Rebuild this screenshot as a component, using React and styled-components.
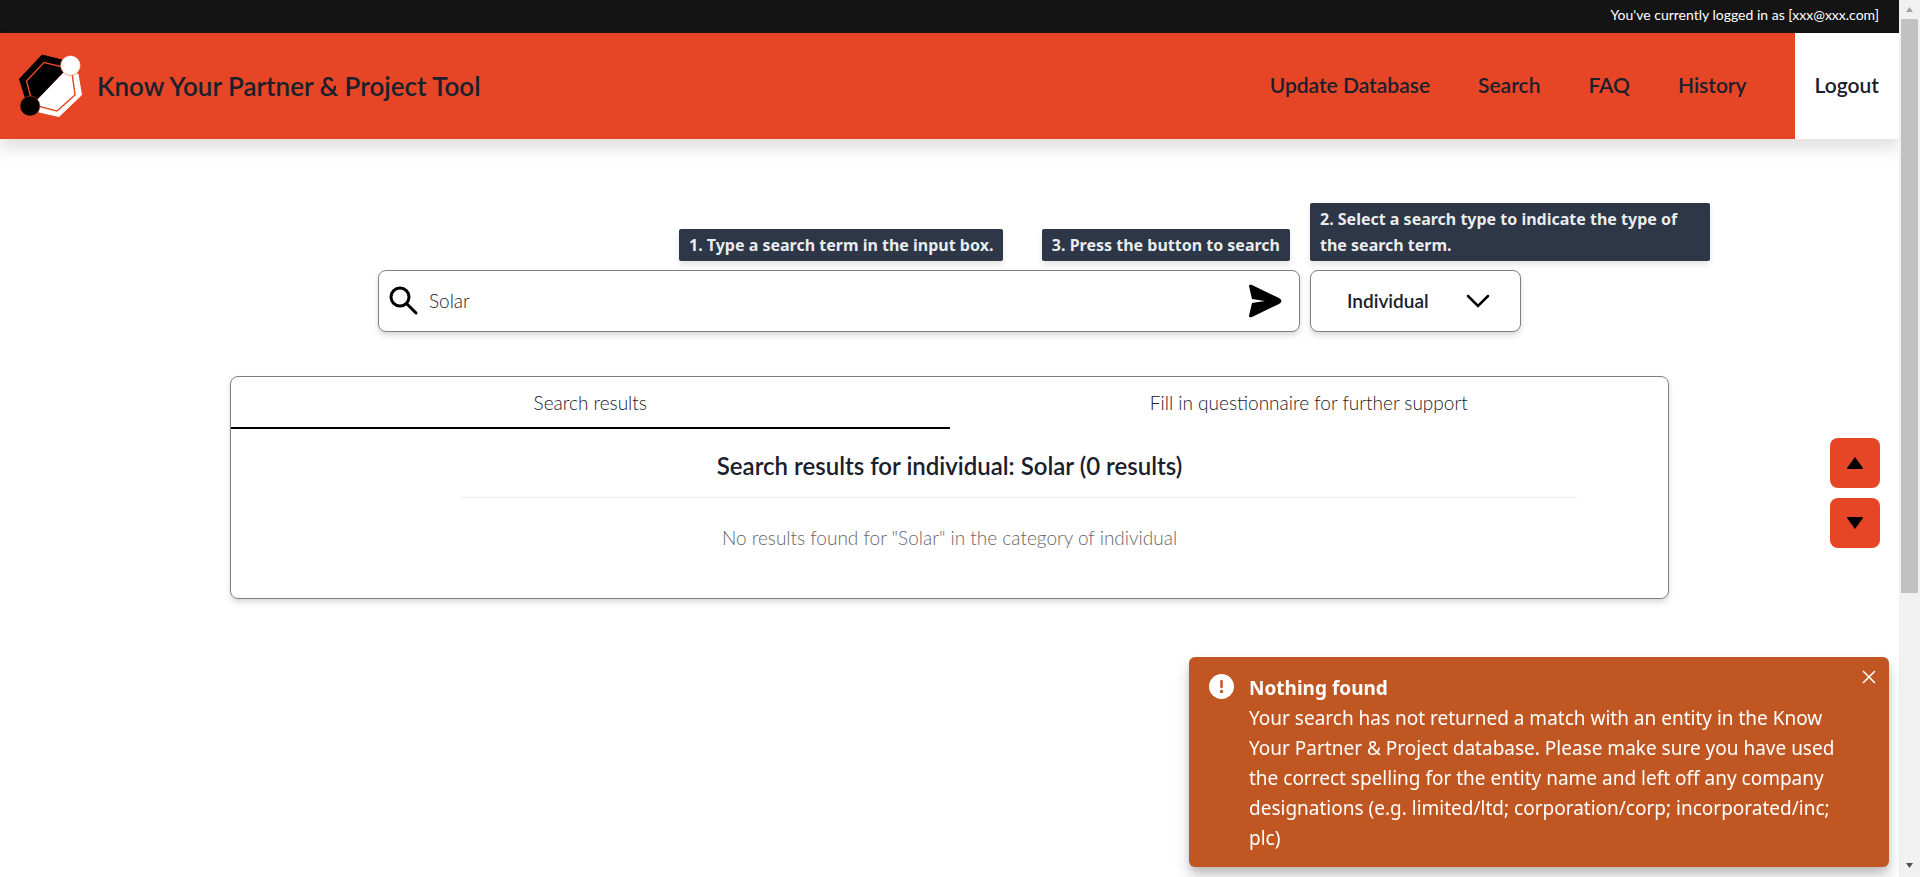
import React from "react";
import styled, { createGlobalStyle } from "styled-components";

const ui = `Lato, "Open Sans", sans-serif`;
const system = `"Noto Sans", "Open Sans", sans-serif`;

const GlobalStyle = createGlobalStyle`
  *, *::before, *::after { box-sizing: border-box; }
  html { overflow: hidden; }
  body { margin: 0; background: #fff; color: #1a202c; font-family: ${ui}; font-size: 19px; }
  button, input, select { font: inherit; color: inherit; margin: 0; }
  h1, h2, p { margin: 0; }
`;

const Window = styled.div`
  display: flex;
  height: 100vh;
  overflow: hidden;
`;

const Page = styled.div`
  flex: 1;
  min-width: 0;
  background: #fff;
`;

const StatusBar = styled.div`
  height: 33px;
  padding: 0 20px;
  background: #141414;
  color: #fff;
  font-size: 14px;
  line-height: 30px;
  text-align: right;
`;

const Header = styled.header`
  display: flex;
  align-items: center;
  height: 106px;
  padding-left: 16px;
  background: #e64626;
  box-shadow: 0 10px 15px rgba(0, 0, 0, 0.12);
`;

const Logo = styled.svg`
  width: 68px;
  height: 68px;
  margin-right: 13px;
`;

const Title = styled.h1`
  flex: 1;
  font-size: 26px;
  font-weight: 600;
  line-height: 32px;
`;

const Nav = styled.nav`
  display: flex;
  align-self: stretch;
  align-items: center;
  gap: 48px;
`;

const NavLink = styled.a`
  color: inherit;
  padding-bottom: 2px;
  font-size: 21px;
  font-weight: 600;
  line-height: 24px;
  text-decoration: none;
`;

const Logout = styled.button`
  align-self: stretch;
  border: 0;
  padding: 0 20px 2px;
  background: #fff;
  font-size: 21px;
  font-weight: 600;
  line-height: 24px;
`;

const Main = styled.main`
  display: flex;
  flex-direction: column;
  align-items: center;
  gap: 44px;
  padding-top: 131px;
`;

const SearchForm = styled.form`
  display: flex;
  gap: 10px;
  width: 1143px;
  max-width: 100%;
`;

const Field = styled.div`
  position: relative;
  display: flex;
  align-items: center;
  flex: ${(p) => (p.$grow ? 1 : "0 0 211px")};
  height: 62px;
  border: 1px solid #808080;
  border-radius: 8px;
  background: #fff;
  box-shadow: 0 4px 6px rgba(0, 0, 0, 0.1), 0 2px 4px rgba(0, 0, 0, 0.06);
`;

const SearchLabel = styled.label`
  display: flex;
  margin-left: 10px;
`;

const SearchInput = styled.input`
  flex: 1;
  min-width: 0;
  padding: 0 10px 2px;
  border: 0;
  outline: 0;
  background: none;
  font-weight: 300;
`;

const SendButton = styled.button`
  display: flex;
  border: 0;
  padding: 0;
  margin-right: 17px;
  background: none;
`;

const TypeSelect = styled.select`
  appearance: none;
  width: 100%;
  height: 100%;
  border: 0;
  padding: 0 36px 2px;
  background: none;
  font-weight: 600;
`;

const Chevron = styled.svg`
  position: absolute;
  right: 30px;
  pointer-events: none;
`;

const Tip = styled.div`
  position: absolute;
  bottom: 70px;
  ${(p) => p.$place}
  padding: 3px 10px;
  border-radius: 2px;
  background: #2d3748;
  color: rgba(255, 255, 255, 0.92);
  font: 700 16px/26px ${system};
  box-shadow: 0 4px 6px rgba(0, 0, 0, 0.1);
`;

const Panel = styled.section`
  width: 1439px;
  max-width: 100%;
  min-height: 223px;
  border: 1px solid #808080;
  border-radius: 8px;
  box-shadow: 0 4px 6px rgba(0, 0, 0, 0.1), 0 2px 4px rgba(0, 0, 0, 0.06);
  text-align: center;
`;

const Tabs = styled.div`
  display: flex;
`;

const Tab = styled.button`
  flex: 1;
  height: 52px;
  padding: 0;
  border: 0;
  border-bottom: 2px solid ${(p) => (p.$active ? "#000" : "transparent")};
  background: none;
  font-weight: 300;
`;

const Results = styled.div`
  padding-top: 20px;
`;

const ResultsTitle = styled.h2`
  font-size: 24px;
  font-weight: 600;
  line-height: 34px;
`;

const Divider = styled.hr`
  margin: 14px 91px 27px 230px;
  border: 0;
  border-top: 1px solid #eeeef8;
`;

const Empty = styled.p`
  color: #666;
  font-weight: 300;
  line-height: 26px;
`;

const Jump = styled.div`
  position: fixed;
  top: 438px;
  right: 40px;
  display: flex;
  flex-direction: column;
  gap: 10px;
`;

const JumpButton = styled.button`
  display: flex;
  align-items: center;
  justify-content: center;
  width: 50px;
  height: 50px;
  padding: 0;
  border: 0;
  border-radius: 8px;
  background: #e64626;
`;

const Toast = styled.div`
  position: fixed;
  right: 31px;
  bottom: 10px;
  display: flex;
  gap: 14px;
  width: 700px;
  padding: 16px 50px 14px 20px;
  border-radius: 6px;
  background: #c05621;
  color: #fff;
  font: 400 19px/30px ${system};
  box-shadow: 0 10px 15px rgba(0, 0, 0, 0.2), 0 4px 6px rgba(0, 0, 0, 0.1);
`;

const ToastIcon = styled.svg`
  flex: none;
`;

const ToastTitle = styled.strong`
  display: block;
  font-weight: 700;
`;

const CloseButton = styled.button`
  position: absolute;
  top: 13px;
  right: 13px;
  display: flex;
  border: 0;
  padding: 0;
  background: none;
`;

const Scrollbar = styled.div`
  display: flex;
  flex-direction: column;
  align-items: center;
  width: 21px;
  background: #f1f1f1;
`;

const Thumb = styled.div`
  width: 17px;
  height: 65.4vh;
  background: #c1c1c1;
`;

const ScrollArrow = styled.svg`
  flex: none;
  width: 17px;
  height: 19px;
`;

const Spacer = styled.div`
  flex: 1;
`;

const links = ["Update Database", "Search", "FAQ", "History"];

export default function App() {
  return (
    <>
      <GlobalStyle />
      <Window>
        <Page>
          <StatusBar>You've currently logged in as [xxx@xxx.com]</StatusBar>
          <Header>
            <Logo viewBox="0 0 68 68" aria-hidden="true">
              <path d="M26 3 46 8V16L17 47 9 45 3.500 27Z" fill="#000" stroke="#000" strokeLinejoin="round" />
              <path d="M62 22 65.500 43 43 64.500 23 60V51L52 21Z" fill="#fff" stroke="#fff" strokeLinejoin="round" />
              <path d="M28 10.500 46 15 56 21 59 43 41 59 22 54 15 46 10.500 29Z" fill="none" stroke="#e64626" strokeWidth="1.500" />
              <path d="M28.500 11.500 46 16 48 20 21 48 17 45 11.500 29.500Z" fill="#000" />
              <path d="M48 20 55 24 58 42 40.500 58 22 53 21 48Z" fill="#fff" />
              <circle cx="54.500" cy="13.500" r="10" fill="#fff" stroke="#e64626" strokeWidth="0.500" />
              <circle cx="14" cy="54" r="10" fill="#000" stroke="#e64626" strokeWidth="0.500" />
            </Logo>
            <Title>Know Your Partner &amp; Project Tool</Title>
            <Nav>
              {links.map((name) => (
                <NavLink key={name} href="#">{name}</NavLink>
              ))}
              <Logout type="button">Logout</Logout>
            </Nav>
          </Header>
          <Main>
            <SearchForm onSubmit={(e) => e.preventDefault()}>
              <Field $grow>
                <Tip $place="left: 300px;">1. Type a search term in the input box.</Tip>
                <Tip $place="right: 9px;">3. Press the button to search</Tip>
                <SearchLabel htmlFor="term" aria-label="Search term">
                  <svg width="30" height="30" viewBox="0 0 30 30" fill="none" stroke="#000" strokeWidth="3" strokeLinecap="round">
                    <circle cx="11" cy="11" r="9" />
                    <path d="m18 18 9 9" />
                  </svg>
                </SearchLabel>
                <SearchInput id="term" defaultValue="Solar" />
                <SendButton type="submit" aria-label="Search">
                  <svg width="34" height="34" viewBox="0 0 34 34">
                    <path d="M1 2Q1 0 4 1L31 14Q36 17 31 20L4 33Q1 34 1 32L4 19 17 17 4 15Z" />
                  </svg>
                </SendButton>
              </Field>
              <Field>
                <Tip $place="left: -1px; width: 400px;">2. Select a search type to indicate the type of the search term.</Tip>
                <TypeSelect aria-label="Search type" defaultValue="Individual">
                  <option>Individual</option>
                </TypeSelect>
                <Chevron width="24" height="14" viewBox="0 0 24 14" fill="none" stroke="#000" strokeWidth="2.500" strokeLinecap="round">
                  <path d="m2 2 10 10 10-10" />
                </Chevron>
              </Field>
            </SearchForm>
            <Panel>
              <Tabs role="tablist">
                <Tab type="button" role="tab" aria-selected="true" $active>Search results</Tab>
                <Tab type="button" role="tab" aria-selected="false">Fill in questionnaire for further support</Tab>
              </Tabs>
              <Results>
                <ResultsTitle>Search results for individual: Solar (0 results)</ResultsTitle>
                <Divider />
                <Empty>No results found for "Solar" in the category of individual</Empty>
              </Results>
            </Panel>
          </Main>
        </Page>
        <Scrollbar aria-hidden="true">
          <ScrollArrow viewBox="0 0 17 19"><path d="M5 12 8.500 7 12 12Z" fill="#a3a3a3" /></ScrollArrow>
          <Thumb />
          <Spacer />
          <ScrollArrow viewBox="0 0 17 19"><path d="M5 5 12 5 8.500 10Z" fill="#505050" /></ScrollArrow>
        </Scrollbar>
      </Window>
      <Jump>
        <JumpButton type="button" aria-label="Scroll up">
          <svg width="18" height="12" viewBox="0 0 18 12"><path d="M9 0 17 11Q17 12 16 12H2Q1 12 1 11Z" /></svg>
        </JumpButton>
        <JumpButton type="button" aria-label="Scroll down">
          <svg width="18" height="12" viewBox="0 0 18 12"><path d="M9 12 17 1Q17 0 16 0H2Q1 0 1 1Z" /></svg>
        </JumpButton>
      </Jump>
      <Toast role="alert">
        <ToastIcon width="26" height="26" viewBox="0 0 26 26">
          <circle cx="12.500" cy="13.500" r="12.500" fill="#fff" />
          <path d="M12.500 8v6" stroke="#c05621" strokeWidth="2.500" strokeLinecap="round" />
          <circle cx="12.500" cy="18.500" r="1.700" fill="#c05621" />
        </ToastIcon>
        <div>
          <ToastTitle>Nothing found</ToastTitle>
          <p>Your search has not returned a match with an entity in the Know Your Partner &amp; Project database. Please make sure you have used the correct spelling for the entity name and left off any company designations (e.g. limited/ltd; corporation/corp; incorporated/inc; plc)</p>
        </div>
        <CloseButton type="button" aria-label="Close">
          <svg width="14" height="14" viewBox="0 0 14 14" stroke="#fff" strokeWidth="1.500"><path d="m1 1 12 12M13 1 1 13" /></svg>
        </CloseButton>
      </Toast>
    </>
  );
}
